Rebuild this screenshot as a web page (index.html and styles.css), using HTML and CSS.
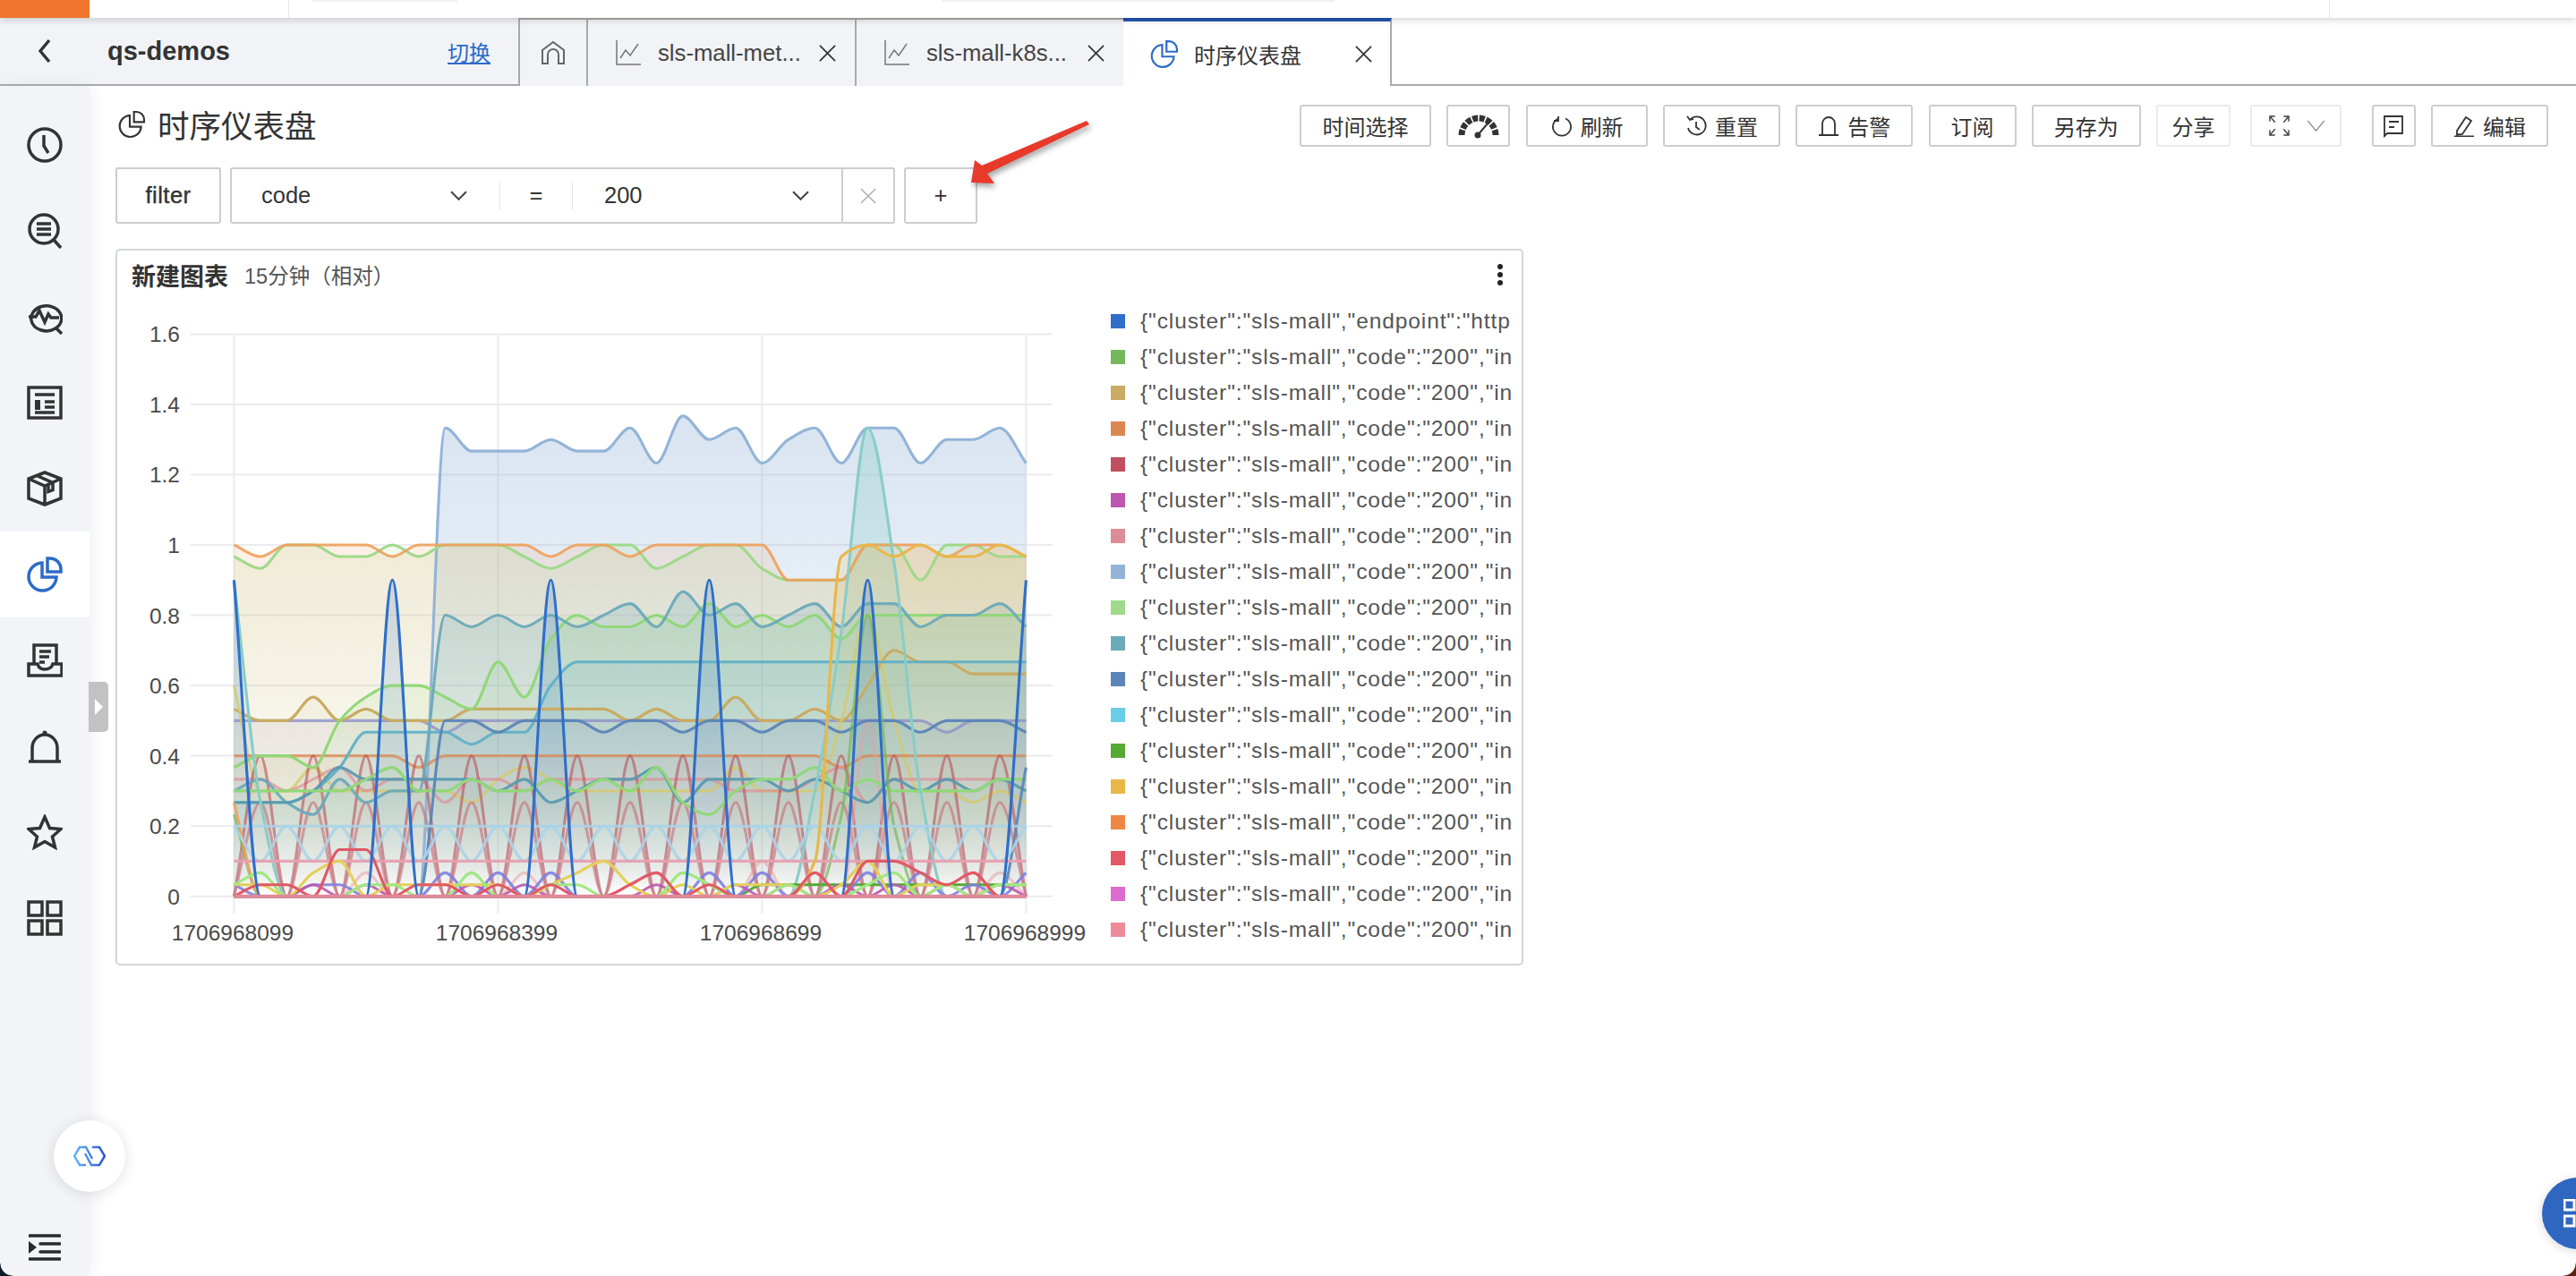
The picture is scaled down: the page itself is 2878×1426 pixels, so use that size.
FILE: index.html
```html
<!DOCTYPE html>
<html lang="zh-CN">
<head>
  <meta charset="UTF-8" />
  <meta name="viewport" content="width=device-width, initial-scale=1.0"/>
  <title>时序仪表盘</title>
  <link rel="stylesheet" href="styles.css">
</head>
<body>
  <div class="topbar">
    <div class="top-logo"></div>
    <div class="top-cell top-cell-a"></div>
    <div class="top-cell top-cell-b"><span class="top-pill top-pill-a"></span><span class="top-pill top-pill-b"></span></div>
    <div class="top-cell top-cell-c"></div>
  </div>

  <div class="tabbar">
    <div class="crumb">
      <svg class="back" viewBox="0 0 14 28"><path d="M12 2 2 14l10 12"/></svg>
      <span class="project">qs-demos</span>
      <a class="switch">切换</a>
    </div>
    <div class="tab tab-home">
      <svg class="tab-icon-home" viewBox="0 0 28 28"><path d="M2 26V11L14 2l12 9v15h-6V16a6 6 0 0 0-12 0v10z"/></svg>
    </div>
    <div class="tab">
      <svg class="tab-icon" viewBox="0 0 28 28"><path d="M1 0v27h27M5 20l6-9 5 6 9-13"/></svg>
      <span class="tab-name">sls-mall-met...</span>
      <svg class="tab-close" viewBox="0 0 20 20"><path d="M1 1l18 18M19 1 1 19"/></svg>
    </div>
    <div class="tab">
      <svg class="tab-icon" viewBox="0 0 28 28"><path d="M1 0v27h27M5 20l6-9 5 6 9-13"/></svg>
      <span class="tab-name">sls-mall-k8s...</span>
      <svg class="tab-close" viewBox="0 0 20 20"><path d="M1 1l18 18M19 1 1 19"/></svg>
    </div>
    <div class="tab tab-active">
      <svg class="tab-icon-pie" viewBox="0 0 24 24"><path d="M10.500 4.500a9 9 0 1 0 9.500 9.500h-9.500z"/><path d="M14 1.500h2a6.500 6.500 0 0 1 6.500 6.500v2H14z"/></svg>
      <span class="tab-name">时序仪表盘</span>
      <svg class="tab-close" viewBox="0 0 20 20"><path d="M1 1l18 18M19 1 1 19"/></svg>
    </div>
    <div class="tab-rest"></div>
  </div>

  <div class="workspace">
    <aside class="sidebar">
      <nav class="nav">
        <a class="nav-item"><svg viewBox="0 0 40 40"><circle cx="20" cy="20" r="18"/><path d="M19 9v12l5 8"/></svg></a>
        <a class="nav-item"><svg viewBox="0 0 40 40"><circle cx="19" cy="18" r="16"/><path d="M11 12h16M11 18h16M11 24h16M30 30l8 9"/></svg></a>
        <a class="nav-item"><svg viewBox="0 0 40 40"><path d="M5 24a17 14 0 1 1 27 9M5 24a17 14 0 0 0 27 9M32 32l7 7"/><path d="M2 20h8l4-7 6 13 4-9 3 4h9"/></svg></a>
        <a class="nav-item"><svg viewBox="0 0 40 40"><rect x="2" y="3" width="36" height="34"/><path d="M9 11h22M20 19h11M20 25h11M9 31h22" /><path class="nav-fill" d="M9 17h6v11H9z"/></svg></a>
        <a class="nav-item"><svg viewBox="0 0 40 40"><path d="M20 2 38 9v22L20 38 2 31V9zM2 9l18 8 18-8M20 17v21M11 5.500l18 8v8l-5 2v-8"/></svg></a>
        <a class="nav-item nav-active"><svg viewBox="0 0 40 40"><path d="M17 7A15.500 15.500 0 1 0 33 23H17z"/><path d="M23 2h3a12 12 0 0 1 12 12v3H23z"/></svg></a>
        <a class="nav-item"><svg viewBox="0 0 40 40"><path d="M8 24V3h25v21M2 24h10c1 4 4 6 8 6s8-2 9-6h10v13H2zM14 10h13M14 16h11M14 22h6"/></svg></a>
        <a class="nav-item"><svg viewBox="0 0 40 40"><path d="M2 37h36M6 37V22A14 15 0 0 1 34 22v15"/><circle class="nav-fill" cx="20" cy="5" r="2.500"/></svg></a>
        <a class="nav-item"><svg viewBox="0 0 40 40"><path d="M20 3l5.500 12.500L38 16.500l-9.500 8.500L31.500 37 20 30.500 8.500 37l3-12L2 16.500l12.500-1z"/></svg></a>
        <a class="nav-item"><svg viewBox="0 0 40 40"><path d="M2 2h15v15H2zM23 2h15v15H23zM2 23h15v15H2zM23 23h15v15H23z"/></svg></a>
      </nav>
      <span class="collapse-handle"></span>
      <svg class="menu-icon" viewBox="0 0 36 30"><path class="menu-lines" d="M1 2h34M13 11h22M13 20h22M1 28h34"/><path class="menu-arrow" d="M0 8l9 7-9 7z"/></svg>
    </aside>

    <main class="content">
      <div class="toolbar">
        <h1 class="page-title">
          <svg class="title-icon" viewBox="0 0 24 24"><path d="M10.500 4.500a9 9 0 1 0 9.500 9.500h-9.500z"/><path d="M14 1.500h2a6.500 6.500 0 0 1 6.500 6.500v2H14z"/></svg>
          时序仪表盘
        </h1>
        <div class="actions">
          <button class="btn btn-time">时间选择</button>
          <button class="btn btn-gauge">
            <svg class="gauge" viewBox="0 0 46 30"><path class="gauge-arc" d="M4 25A19 19 0 0 1 42 25"/><path class="gauge-needle" d="M22 25 33 12"/><circle class="gauge-dot" cx="22" cy="25" r="3.500"/></svg>
          </button>
          <button class="btn btn-refresh"><svg class="btn-icon" viewBox="0 0 24 24"><path d="M8 3.500A10 10 0 1 0 16 3.500M8 1v5H3"/></svg>刷新</button>
          <button class="btn"><svg class="btn-icon" viewBox="0 0 24 24"><path d="M5 5a10 10 0 1 1-2 9M2 1l3 4 4-1M12 7v6l4 3"/></svg>重置</button>
          <button class="btn"><svg class="btn-icon" viewBox="0 0 24 24"><path d="M1 22h22M5 22V9a7 7 0 0 1 14 0v13"/></svg>告警</button>
          <button class="btn">订阅</button>
          <button class="btn">另存为</button>
          <button class="btn btn-light">分享</button>
          <button class="btn btn-light btn-expand">
            <svg class="expand-icon" viewBox="0 0 24 24"><path d="M1 7V1h6M1 1l6 7M23 7V1h-6M23 1l-6 7M1 17v6h6M1 23l6-7M23 17v6h-6M23 23l-6-7"/></svg>
            <svg class="expand-caret" viewBox="0 0 22 14"><path d="M1 1l10 12L21 1"/></svg>
          </button>
          <button class="btn btn-comment"><svg class="btn-icon comment-icon" viewBox="0 0 24 26"><path d="M2 24V2h20v19H5zM7 8h11M7 14h6"/></svg></button>
          <button class="btn"><svg class="btn-icon" viewBox="0 0 24 24"><path d="M4 17 14 2l6 4-10 15-6 .5zM1 23.500h22"/></svg>编辑</button>
        </div>
      </div>

      <div class="filter-row">
        <div class="filter-label">filter</div>
        <div class="filter-box">
          <div class="filter-key">code<svg class="caret" viewBox="0 0 18 10"><path d="M1 1l8 8 8-8"/></svg></div>
          <div class="filter-op">=</div>
          <div class="filter-value">200<svg class="caret" viewBox="0 0 18 10"><path d="M1 1l8 8 8-8"/></svg></div>
          <div class="filter-clear"><svg viewBox="0 0 20 20"><path d="M1 1l18 18M19 1 1 19"/></svg></div>
        </div>
        <div class="filter-add">+</div>
      </div>

      <section class="panel">
        <header class="panel-head">
          <span class="panel-title">新建图表</span>
          <span class="panel-range">15分钟（相对）</span>
          <span class="panel-more"><i></i><i></i><i></i></span>
        </header>
        <div class="panel-body">
          <svg id="chart" class="chart" viewBox="131 337 1090 739"></svg>
          <ul id="legend" class="legend"></ul>
        </div>
      </section>
    </main>
  </div>

  <svg class="arrow" viewBox="0 0 150 85">
    <path d="M142 7 139 3 22 53 14 47 10 72 36 73 28 62z"/>
  </svg>

  <div class="assist">
    <svg viewBox="0 0 36 24">
      <defs><linearGradient id="assistGrad" gradientUnits="userSpaceOnUse" x1="0" x2="36" y1="0" y2="0"><stop offset="0" stop-color="#6cb8f6"/><stop offset="1" stop-color="#2a55cc"/></linearGradient></defs>
      <path d="M14 22H7L1 12 7 2h7l7 13M21 2h8l6 10-6 10H20L13 9"/>
    </svg>
  </div>
  <div class="help-ball">
    <svg viewBox="0 0 32 32"><path d="M1 1h11v11H1zM1 19h11v11H1zM19 1h11v11H19zM19 19h11v11H19z"/></svg>
  </div>
  <span class="corner corner-left"></span>
  <span class="corner corner-right"></span>

  <script src="chart.js"></script>
</body>
</html>
```

FILE: styles.css
```css
* {
  box-sizing: border-box;
}
html, body {
  margin: 0;
  height: 100%;
}
body {
  position: relative;
  display: flex;
  flex-direction: column;
  overflow: hidden;
  background-color: #fff;
  color: #333;
  font-family: "Liberation Sans", "Noto Sans CJK SC", sans-serif;
  font-size: 24px;
}
svg {
  display: block;
  fill: none;
  stroke: currentColor;
}

/* top strip */
.topbar {
  position: relative;
  z-index: 3;
  display: flex;
  height: 20px;
  background-color: #fff;
  box-shadow: 0 2px 8px rgba(0, 0, 0, .18);
}
.top-logo {
  width: 100px;
  background-color: #f0762e;
}
.top-cell {
  border-right: 1px solid #e6e6e6;
}
.top-cell-a {
  width: 223px;
}
.top-cell-b {
  display: flex;
  width: 2280px;
  padding-left: 26px;
}
.top-cell-c {
  flex: 1;
  border-right: none;
}
.top-pill {
  display: block;
  height: 2px;
  background-color: #f1f1f1;
}
.top-pill-a {
  width: 162px;
}
.top-pill-b {
  width: 439px;
  margin-left: 541px;
}

/* tabs */
.tabbar {
  display: flex;
  height: 76px;
  border-bottom: 2px solid #aaa;
  flex-shrink: 0;
}
.crumb {
  display: flex;
  align-items: center;
  width: 579px;
  background-color: #f2f3f7;
}
.back {
  width: 14px;
  height: 28px;
  margin-left: 43px;
  stroke: #333;
  stroke-width: 3.500;
}
.project {
  flex: 1;
  margin-left: 63px;
  font-size: 29px;
  font-weight: bold;
}
.switch {
  margin-right: 31px;
  color: #2b6bc9;
  text-decoration: underline;
}
.tab {
  display: flex;
  align-items: center;
  width: 300px;
  height: 76px;
  padding: 0 21px 0 31px;
  border-left: 2px solid #aaa;
  border-top: 2px solid #aaa;
  background-color: #f2f3f7;
  color: #444;
}
.tab-home {
  width: 76px;
  padding: 0 0 0 23px;
  color: #666;
}
.tab-icon-home {
  width: 28px;
  height: 28px;
  stroke-width: 2;
}
.tab-icon {
  width: 28px;
  height: 28px;
  margin-right: 19px;
  stroke: #777;
  stroke-width: 1.500;
  flex-shrink: 0;
}
.tab-name {
  flex: 1;
  font-size: 25.700px;
  white-space: nowrap;
}
.tab-close {
  width: 19px;
  height: 19px;
  stroke: #333;
  stroke-width: 1.800;
  flex-shrink: 0;
}
.tab-active {
  padding: 0 20px 0 29px;
  border-left: none;
  border-top: 4px solid #2456b4;
  border-right: 2px solid #aaa;
  background-color: #fff;
  color: #333;
}
.tab-active .tab-name {
  font-size: 24px;
}
.tab-icon-pie {
  width: 33px;
  height: 33px;
  margin-right: 17px;
  stroke: #2b6bc9;
  stroke-width: 1.600;
  flex-shrink: 0;
}
.tab-rest {
  flex: 1;
}

/* page below the tabs */
.workspace {
  display: flex;
  flex: 1;
  min-height: 0;
}
.sidebar {
  position: relative;
  z-index: 1;
  width: 100px;
  flex-shrink: 0;
  background-color: #f2f4f8;
  box-shadow: 4px 0 18px rgba(0, 0, 0, .06);
}
.nav {
  display: flex;
  flex-direction: column;
  padding-top: 18px;
}
.nav-item {
  display: flex;
  align-items: center;
  justify-content: center;
  height: 96px;
  color: #333;
}
.nav-item svg {
  width: 40px;
  height: 40px;
  stroke-width: 3.500;
}
.nav-fill {
  fill: currentColor;
  stroke: none;
}
.nav-active {
  background-color: #fff;
  color: #2b6bc9;
}
.collapse-handle {
  position: absolute;
  left: 99px;
  top: 666px;
  width: 22px;
  height: 56px;
  border-radius: 0 5px 5px 0;
  background-color: #c2c2c2;
}
.collapse-handle::after {
  content: "";
  position: absolute;
  left: 7px;
  top: 19px;
  border-left: 9px solid #fff;
  border-top: 9px solid transparent;
  border-bottom: 9px solid transparent;
}
.menu-icon {
  position: absolute;
  left: 32px;
  bottom: 17px;
  width: 36px;
  height: 30px;
}
.menu-lines {
  stroke: #2a2a2a;
  stroke-width: 3.500;
  stroke-linecap: round;
}
.menu-arrow {
  fill: #2a2a2a;
  stroke: none;
}

.content {
  flex: 1;
  min-width: 0;
  padding: 21px 31px 0 29px;
}
.toolbar {
  display: flex;
  align-items: center;
  justify-content: space-between;
  height: 47px;
}
.page-title {
  display: flex;
  align-items: center;
  gap: 13px;
  margin: -4px 0 0;
  font-size: 35.500px;
  font-weight: normal;
}
.title-icon {
  width: 32px;
  height: 32px;
  margin-left: 2px;
  stroke: #333;
  stroke-width: 1.600;
}
.actions {
  display: flex;
  gap: 17.300px;
}
.btn {
  display: flex;
  align-items: center;
  gap: 9px;
  height: 47px;
  padding: 0 23px;
  border: 2px solid #cdcdcd;
  border-radius: 3px;
  background-color: #fff;
  color: #333;
  font-family: inherit;
  font-size: 24px;
  white-space: nowrap;
}
.btn-time {
  padding: 0 23.500px;
}
.btn-refresh {
  padding: 0 25px 0 26px;
}
.btn-icon {
  width: 24px;
  height: 24px;
  stroke-width: 1.800;
  stroke: #333;
}
.btn-gauge {
  width: 71px;
  padding: 0;
  justify-content: center;
}
.gauge {
  width: 46px;
  height: 30px;
}
.gauge-arc {
  stroke: #333;
  stroke-width: 7;
  stroke-dasharray: 6 1.600;
}
.gauge-needle {
  stroke: #333;
  stroke-width: 2;
}
.gauge-dot {
  fill: #333;
  stroke: none;
}
.btn-light {
  padding: 0 15.500px;
  border-color: #ebebeb;
}
.btn-expand {
  width: 102px;
  margin-left: 5px;
  margin-right: 16px;
  padding: 0 16px 0 19px;
  justify-content: space-between;
}
.expand-icon {
  width: 23px;
  height: 23px;
  stroke: #444;
  stroke-width: 1.500;
}
.expand-caret {
  width: 21px;
  height: 13px;
  stroke: #888;
  stroke-width: 1.500;
}
.btn-comment {
  width: 49px;
  padding: 0;
  justify-content: center;
}
.comment-icon {
  height: 26px;
}

/* filter row */
.filter-row {
  display: flex;
  gap: 10px;
  margin-top: 23px;
  height: 63px;
}
.filter-label, .filter-add, .filter-box {
  display: flex;
  align-items: center;
  border: 2px solid #cdcdcd;
  border-radius: 3px;
  font-size: 25.500px;
}
.filter-label {
  justify-content: center;
  width: 118px;
  letter-spacing: .5px;
  -webkit-text-stroke: .4px #333;
}
.filter-box {
  width: 743px;
}
.filter-key, .filter-value {
  display: flex;
  align-items: center;
  justify-content: space-between;
}
.filter-key {
  width: 300px;
  height: 32px;
  padding: 0 36px 0 33px;
  border-right: 1px solid #e4e4e4;
}
.filter-op {
  display: flex;
  align-items: center;
  justify-content: center;
  width: 81px;
  height: 32px;
  border-right: 1px solid #e4e4e4;
}
.filter-value {
  flex: 1;
  padding: 0 36px 0 35px;
}
.caret {
  width: 19px;
  height: 11px;
  stroke: #444;
  stroke-width: 2;
}
.filter-clear {
  display: flex;
  align-items: center;
  justify-content: center;
  width: 58px;
  height: 100%;
  border-left: 2px solid #cdcdcd;
  color: #aaa;
}
.filter-clear svg {
  width: 18px;
  height: 18px;
  stroke-width: 1.500;
}
.filter-add {
  justify-content: center;
  width: 82px;
}

/* chart panel */
.panel {
  width: 1573px;
  height: 801px;
  margin-top: 28px;
  border: 2px solid #d2d5db;
  border-radius: 5px;
}
.panel-head {
  display: flex;
  align-items: center;
  height: 58px;
  padding: 0 0 4px 16px;
}
.panel-title {
  font-size: 27px;
  font-weight: bold;
}
.panel-range {
  margin-left: 18px;
  font-size: 23.500px;
  color: #555;
}
.panel-more {
  display: flex;
  flex-direction: column;
  gap: 3px;
  margin-left: auto;
  margin-right: 21px;
}
.panel-more i {
  width: 6px;
  height: 6px;
  border-radius: 50%;
  background-color: #222;
}
.panel-body {
  display: flex;
}
.chart {
  width: 1090px;
  height: 739px;
  flex-shrink: 0;
  stroke: none;
}
.chart text {
  fill: #4a4a4a;
  font-size: 24.500px;
}
.legend {
  width: 448px;
  margin: 1px 0 0 20px;
  padding: 0;
  list-style: none;
  overflow: hidden;
}
.legend li {
  display: flex;
  align-items: center;
  gap: 17px;
  height: 40px;
  color: #555;
  font-size: 24.500px;
  letter-spacing: .9px;
  white-space: nowrap;
}
.swatch {
  width: 16px;
  height: 16px;
  flex-shrink: 0;
}

/* things lying over the page */
.arrow {
  position: absolute;
  left: 1075px;
  top: 132px;
  width: 150px;
  height: 85px;
  stroke: none;
  fill: #e8392b;
  filter: drop-shadow(2px 4px 3px rgba(0, 0, 0, .35));
}
.assist {
  position: absolute;
  left: 60px;
  top: 1252px;
  z-index: 2;
  display: flex;
  align-items: center;
  justify-content: center;
  width: 80px;
  height: 80px;
  border-radius: 50%;
  background-color: #fff;
  box-shadow: 0 2px 16px rgba(0, 0, 0, .12);
}
.assist svg {
  width: 36px;
  height: 24px;
  stroke: url(#assistGrad);
  stroke-width: 2.500;
}
.help-ball {
  position: absolute;
  left: 2840px;
  top: 1316px;
  display: flex;
  align-items: center;
  width: 80px;
  height: 80px;
  padding-left: 24px;
  border-radius: 50%;
  background-color: #2f66c0;
  box-shadow: 0 2px 12px rgba(0, 0, 0, .15);
}
.help-ball svg {
  width: 32px;
  height: 32px;
  stroke: #fff;
  stroke-width: 3;
}
.corner {
  position: absolute;
  bottom: 0;
  z-index: 4;
  width: 14px;
  height: 14px;
}
.corner-left {
  left: 0;
  background: radial-gradient(circle at 100% 0, transparent 13px, #0a1a28 14px);
}
.corner-right {
  right: 0;
  background: radial-gradient(circle at 0 0, transparent 13px, #5a2412 14px);
}
```

FILE: chart.js
```js
// values are read off at 30s steps, 31 points
const X0 = 261.4, STEP = 29.5, Y0 = 1000.7, PER_UNIT = 392.7;
const xAt = i => X0 + i * STEP;
const yAt = v => Y0 - v * PER_UNIT;

const legendColors = ["#2f6fca", "#75b85c", "#c9ab63", "#db8850", "#c05060", "#bc58b0", "#dd8b95", "#93b4d8", "#a0d98a",
  "#6baab8", "#5b85b8", "#69cde6", "#55aa35", "#e9b748", "#ef8744", "#e25865", "#dd6bcf", "#ee8b98"];

const wave = (even, odd) => Array.from({ length: 31 }, (_, i) => (i % 2 ? odd : even));
const flat = v => new Array(31).fill(v);
const blueSpikes = flat(0);
[0, 6, 12, 18, 24, 30].forEach(i => { blueSpikes[i] = .9; });

// [colour, values, fill strength, line strength]
const series = [
  ["#93b4d8", [0,0,0,0,0,0,0,0,1.333,1.267,1.267,1.267,1.3,1.267,1.267,1.333,1.233,1.367,1.3,1.333,1.233,1.3,1.333,1.233,1.333,1.333,1.233,1.3,1.3,1.333,1.233], .42, 1],
  ["#a0d98a", [.967,.933,1,1,.967,.967,1,.967,1,1,1,.967,.933,.967,1,1,.933,.967,1,1,.933,.9,.9,.9,1,1,.9,1,1,.967,.967], .25, 1],
  ["#f0a05c", [1,.967,1,1,1,1,.967,1,1,1,1,1,.967,1,1,.967,1,1,1,1,1,.9,.9,.9,1,1,1,.967,1,1,.967], .25, .9],
  ["#8f90c8", [.5,.5,.5,.5,.5,.5,.5,.5,.467,.5,.5,.5,.5,.5,.5,.5,.5,.5,.5,.5,.5,.5,.5,.5,.5,.5,.5,.467,.5,.5,.5], .34, .8],
  ["#c9ab63", [.533,.5,.5,.567,.5,.533,.5,.5,.5,.533,.533,.533,.533,.533,.533,.5,.533,.5,.5,.567,.5,.5,.533,.5,.6,.7,.667,.667,.633,.633,.633], .2, 1],
  ["#d4c86a", [.6,.3,.3,.367,.3,.3,.3,.3,.3,.267,.333,.367,.333,.3,.3,.3,.3,.3,.3,.367,.3,.3,.3,.5,.8,.5,.3,.3,.267,.3,.267], .15, .75],
  ["#db8850", [.4,.4,.4,.4,.4,.4,.4,.367,.4,.4,.4,.4,.4,.4,.4,.4,.4,.4,.4,.4,.4,.4,.4,.367,.4,.4,.4,.4,.4,.4,.4], .34, .75],
  ["#dd8b95", [.333,.333,.3,.333,.367,.3,.333,.333,.267,.333,.333,.3,.333,.333,.333,.333,.333,.333,.333,.3,.3,.3,.333,.367,.267,.333,.333,.333,.333,.333,.333], .2, .65],
  ["#b8505c", wave(0, .4), .25, .6],
  ["#c87a84", wave(0, .267), .2, .7],
  ["#e8a0a8", [0,0,0,0,0,.067,0,0,0,0,0,.067,0,0,0,0,0,0,0,0,.1,0,0,0,.5,0,0,0,0,.067,0], .2, .55],
  ["#90d878", [.367,.4,.4,.367,.5,.567,.6,.6,.567,.533,.667,.567,.733,.8,.767,.767,.8,.767,.833,.767,.8,.767,.8,.733,.8,.8,.8,.8,.8,.8,.8], .36, 1],
  ["#6baab8", [.3,.333,.267,.233,.333,.267,.3,.3,.8,.767,.8,.767,.8,.767,.8,.833,.767,.867,.8,.833,.767,.8,.833,.767,.833,.833,.767,.8,.8,.833,.767], .42, .95],
  ["#5aaec8", [.267,.267,.267,.3,.367,.467,.467,.467,.467,.433,.467,.467,.6,.667,.667,.667,.667,.667,.667,.667,.667,.667,.667,.667,.667,.667,.667,.667,.667,.667,.667], .36, .9],
  ["#5a9ab0", [.267,.267,.267,.3,.367,.333,.333,.333,.333,.333,.3,.333,.267,.3,.333,.333,.367,.267,.333,.333,.333,.3,.333,.3,.267,.333,.3,.333,.3,.333,.3], .4, .95],
  ["#90d878", [.3,.3,.3,.3,.3,.333,.367,.3,.3,.333,.3,.3,.333,.3,.333,.3,.367,.267,.233,.3,.333,.333,.367,.3,.333,.3,.3,.3,.3,.333,.333], .36, 1],
  ["#5b85b8", [0,0,0,0,0,0,0,0,.5,.5,.467,.5,.5,.5,.467,.5,.5,.467,.5,.5,.467,.5,.5,.467,.5,.5,.467,.5,.5,.5,.467], .36, .95],
  ["#5b85b8", [0,0,0,0,0,0,0,0,0,0,0,0,0,0,0,0,0,0,0,0,0,0,0,0,0,0,0,0,0,0,.367], .3, .9],
  ["#75b85c", [.233,0,0,0,0,0,0,0,0,0,0,0,0,0,0,0,0,0,0,0,0,0,0,.23,.8,.2,0,0,0,0,0], .2, .7],
  ["#f0a05c", [.267,0,0,0,0,0,0,0,0,0,0,0,0,0,0,0,0,0,0,0,0,0,0,0,0,0,0,0,0,0,0], .2, .9],
  ["#8accc8", [.9,.27,0,0,0,0,0,0,0,0,0,0,0,0,0,0,0,0,0,0,0,0,.3,.75,1.333,.95,.3,0,0,0,0], .45, 1],
  ["#aad4e8", flat(.2), .3, .9],
  ["#aad4e8", wave(.2, .1), .3, .9],
  ["#e8a0b0", flat(.1), .3, .95],
  ["#55aa35", [0,0,0,0,0,0,0,0,0,0,0,0,0,0,0,0,0,0,0,0,.033,.033,.033,.033,.033,.033,.033,.033,.033,.033,.033], .3, 1],
  ["#8080e0", [.033,0,0,.033,.033,0,0,0,.067,0,.067,0,.067,0,0,0,0,0,.067,0,.067,0,0,0,.067,0,.067,0,.033,0,.067], .3, .9],
  ["#bc58b0", [0,0,0,.033,0,.033,0,0,0,.033,0,.033,0,0,0,0,.033,0,0,.033,0,.033,0,.033,0,.033,0,.033,0,.033,0], .3, .9],
  ["#e4cf5a", [.033,.033,0,.067,.1,0,.033,.033,.033,.033,.033,0,.033,.067,.1,.033,0,.033,0,.033,.033,.033,0,.033,.1,0,.033,.033,0,.033,.033], .3, 1],
  ["#a0e880", [.033,.067,0,0,0,.033,.033,0,0,.067,0,0,.033,.033,0,0,0,.067,.033,0,0,.033,0,0,.033,.067,0,.033,0,.033,.033], .3, 1],
  ["#e9b748", [0,0,0,0,0,0,0,0,0,0,0,0,0,0,0,0,0,0,0,0,0,0,.1,.967,1,.967,1,.967,.967,1,.967], .3, 1],
  ["#e25865", [0,.033,.033,0,.133,.133,0,.033,.033,0,.033,0,.033,0,0,.033,.067,0,.033,0,0,0,.067,0,.1,.1,.067,.033,.067,0,0], .3, 1],
  ["#2f6fca", blueSpikes, .35, 1],
  ["#e08898", flat(0), 0, 1]
];

// same curve as d3 curveMonotoneX: flat runs stay flat, no overshoot
function monotonePath(vals) {
  const pts = vals.map((v, i) => [xAt(i), yAt(v)]);
  const n = pts.length;
  const slope = [];
  for (let i = 0; i < n - 1; i++) slope.push((pts[i + 1][1] - pts[i][1]) / STEP);
  const tan = new Array(n).fill(0);
  tan[0] = slope[0];
  tan[n - 1] = slope[n - 2];
  for (let i = 1; i < n - 1; i++) {
    if (slope[i - 1] * slope[i] > 0) {
      tan[i] = 2 * slope[i - 1] * slope[i] / (slope[i - 1] + slope[i]);
    }
  }
  let d = `M${pts[0][0].toFixed(1)} ${pts[0][1].toFixed(1)}`;
  for (let i = 0; i < n - 1; i++) {
    const h = STEP / 3;
    d += `C${(pts[i][0] + h).toFixed(1)} ${(pts[i][1] + tan[i] * h).toFixed(1)} ` +
      `${(pts[i + 1][0] - h).toFixed(1)} ${(pts[i + 1][1] - tan[i + 1] * h).toFixed(1)} ` +
      `${pts[i + 1][0].toFixed(1)} ${pts[i + 1][1].toFixed(1)}`;
  }
  return d;
}

const NS = "http://www.w3.org/2000/svg";
const chart = document.getElementById("chart");

function add(parent, tag, attrs, text) {
  const el = document.createElementNS(NS, tag);
  Object.keys(attrs).forEach(k => el.setAttribute(k, attrs[k]));
  if (text !== undefined) el.textContent = text;
  parent.appendChild(el);
  return el;
}

const defs = add(chart, "defs", {});
const gridStyle = { stroke: "#ebebef", "stroke-width": 2 };

["0", "0.2", "0.4", "0.6", "0.8", "1", "1.2", "1.4", "1.6"].forEach(label => {
  const y = yAt(parseFloat(label));
  add(chart, "line", { x1: 213, x2: 1176, y1: y, y2: y, ...gridStyle });
  add(chart, "text", { x: 201, y: y + 9, "text-anchor": "end" }, label);
});
["1706968099", "1706968399", "1706968699", "1706968999"].forEach((label, i) => {
  const x = xAt(i * 10);
  add(chart, "line", { x1: x, x2: x, y1: 372, y2: 1020, ...gridStyle });
  add(chart, "text", { x: x - 1.5, y: 1050, "text-anchor": "middle" }, label);
});

series.forEach(([color, vals, fillAlpha], idx) => {
  const grad = add(defs, "linearGradient", { id: "fade" + idx, gradientUnits: "userSpaceOnUse", x1: 0, x2: 0, y1: 372, y2: Y0 });
  add(grad, "stop", { offset: 0, "stop-color": color, "stop-opacity": fillAlpha });
  add(grad, "stop", { offset: 1, "stop-color": color, "stop-opacity": 0 });
  const line = monotonePath(vals);
  add(chart, "path", { d: `${line}L${xAt(30)} ${Y0}L${xAt(0)} ${Y0}Z`, fill: `url(#fade${idx})` });
});
series.forEach(([color, vals, , lineAlpha], idx) => {
  const width = idx === series.length - 1 ? 4 : 3.1;
  add(chart, "path", { d: monotonePath(vals), fill: "none", stroke: color, "stroke-width": width, "stroke-opacity": lineAlpha });
});

const legend = document.getElementById("legend");
legendColors.forEach((color, i) => {
  const li = document.createElement("li");
  const swatch = document.createElement("span");
  swatch.className = "swatch";
  swatch.style.backgroundColor = color;
  li.appendChild(swatch);
  li.appendChild(document.createTextNode(i === 0
    ? '{"cluster":"sls-mall","endpoint":"http'
    : '{"cluster":"sls-mall","code":"200","in'));
  legend.appendChild(li);
});
```
